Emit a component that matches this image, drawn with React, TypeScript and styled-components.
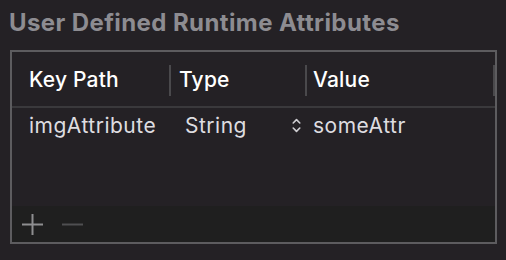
import styled, { createGlobalStyle } from 'styled-components'

const GlobalStyle = createGlobalStyle`
  html, body {
    margin: 0;
    padding: 0;
    background: #242125;
  }
  body {
    font-family: Inter, "Liberation Sans", sans-serif;
    -webkit-font-smoothing: antialiased;
  }
`

function App() {
  return (
    <Page>
      <GlobalStyle />
      <Title>User Defined Runtime Attributes</Title>
      <Table>
        <HeaderRow>
          <Cell width={157} pad={17}>Key Path</Cell>
          <Sep />
          <Cell width={134} pad={8}>Type</Cell>
          <Sep />
          <Cell width={186} pad={6}>Value</Cell>
          <Sep />
        </HeaderRow>
        <Rows>
          <Row>
            <BodyCell width={157} pad={17}>imgAttribute</BodyCell>
            <Spacer />
            <BodyCell width={134} pad={14}>
              <span>String</span>
              <Stepper width="9" height="15" viewBox="0 0 9 15">
                <path d="M1.2 5 L4.5 1.6 L7.8 5" />
                <path d="M1.2 10 L4.5 13.4 L7.8 10" />
              </Stepper>
            </BodyCell>
            <Spacer />
            <BodyCell width={186} pad={6}>someAttr</BodyCell>
          </Row>
        </Rows>
        <Footer>
          <IconButton width="21" height="21" viewBox="0 0 21 21" dim={false}>
            <path d="M0 10.5 H21 M10.5 0 V21" />
          </IconButton>
          <IconButton width="21" height="21" viewBox="0 0 21 21" dim>
            <path d="M0 10.5 H21" />
          </IconButton>
        </Footer>
      </Table>
    </Page>
  )
}

const Page = styled.div`
  width: 506px;
  height: 260px;
  box-sizing: border-box;
  padding: 10px 9px 0 10px;
`

const Title = styled.div`
  font-size: 24px;
  font-weight: 700;
  color: #8d8c91;
  line-height: 26px;
  margin-left: -1px;
  letter-spacing: 0.4px;
`

const Table = styled.div`
  margin-top: 14px;
  width: 487px;
  height: 194px;
  box-sizing: border-box;
  border: 2px solid #5d5c5f;
  display: flex;
  flex-direction: column;
`

const HeaderRow = styled.div`
  display: flex;
  align-items: center;
  height: 54px;
  border-bottom: 2px solid #3a393c;
  flex-shrink: 0;
`

const Cell = styled.div<{ width: number; pad: number }>`
  width: ${({ width }) => width}px;
  padding-left: ${({ pad }) => pad}px;
  box-sizing: border-box;
  font-size: 21px;
  font-weight: 500;
  letter-spacing: 0.2px;
  color: #ffffff;
`

const Sep = styled.div`
  width: 2px;
  height: 31px;
  background: #4a494c;
  margin-top: 2px;
`

const Rows = styled.div`
  flex: 1;
`

const Row = styled.div`
  display: flex;
  align-items: center;
  height: 34px;
`

const BodyCell = styled.div<{ width: number; pad: number }>`
  width: ${({ width }) => width}px;
  padding-left: ${({ pad }) => pad}px;
  padding-right: 4px;
  box-sizing: border-box;
  display: flex;
  align-items: center;
  justify-content: space-between;
  font-size: 21px;
  font-weight: 400;
  letter-spacing: 0.5px;
  color: #dedde0;
`

const Spacer = styled.div`
  width: 2px;
`

const Stepper = styled.svg`
  fill: none;
  stroke: #cfced2;
  stroke-width: 1.6;
  stroke-linecap: round;
  stroke-linejoin: round;
`

const Footer = styled.div`
  height: 36px;
  background: #1f1f1f;
  display: flex;
  align-items: center;
  gap: 19px;
  padding-left: 10px;
  flex-shrink: 0;
`

const IconButton = styled.svg<{ dim: boolean }>`
  stroke: ${({ dim }) => (dim ? '#4f4f51' : '#8e8e90')};
  stroke-width: 2;
  fill: none;
`

export default App
